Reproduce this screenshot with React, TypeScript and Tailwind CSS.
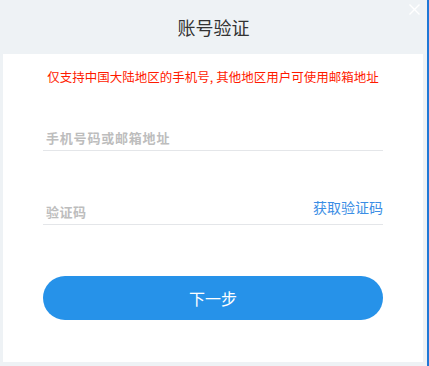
import React from "react";

export default function App() {
  return (
    <div
      className="flex h-[366px] w-[429px] bg-[#eef2f5]"
      style={{ fontFamily: '"Noto Sans CJK SC", "Noto Sans", sans-serif' }}
    >
      <div className="flex w-[427px] flex-col">
        <div className="relative flex h-[54px] items-center justify-center">
          <span className="text-[18px] leading-[24px] text-[#333333]">账号验证</span>
          <svg
            className="absolute right-[7px] top-[4px]"
            width="11"
            height="11"
            viewBox="0 0 11 11"
            fill="none"
            stroke="#ffffff"
            strokeWidth="1.4"
          >
            <path d="M0.5 0.5L10.5 10.5M10.5 0.5L0.5 10.5" />
          </svg>
        </div>
        <div className="ml-[3px] mr-[4px] flex h-[308px] flex-col bg-white px-[40px]">
          <p className="-mx-[30px] mt-[14px] whitespace-nowrap text-center text-[12.5px] leading-[18px] text-[#ff1a00]">
            仅支持中国大陆地区的手机号, 其他地区用户可使用邮箱地址
          </p>
          <div className="mt-[34px] flex h-[31px] items-end border-b border-[#e4e6e9] pb-[3px] pl-[3px]">
            <span className="text-[13px] font-bold leading-[18px] tracking-[0.8px] text-[#bdbdbd]">手机号码或邮箱地址</span>
          </div>
          <div className="mt-[43px] flex h-[31px] items-end justify-between border-b border-[#e4e6e9] pb-[3px] pl-[3px]">
            <span className="text-[13px] font-bold leading-[18px] tracking-[0.5px] text-[#bdbdbd]">验证码</span>
            <span className="mb-[5px] text-[14px] leading-[18px] text-[#3b8ee5]">获取验证码</span>
          </div>
          <button className="mt-[51px] flex h-[44px] w-full items-center justify-center rounded-full bg-[#2692e9] text-[16px] text-white">
            下一步
          </button>
        </div>
      </div>
      <div className="h-full w-[2px] bg-[#1f78d6]" />
    </div>
  );
}
